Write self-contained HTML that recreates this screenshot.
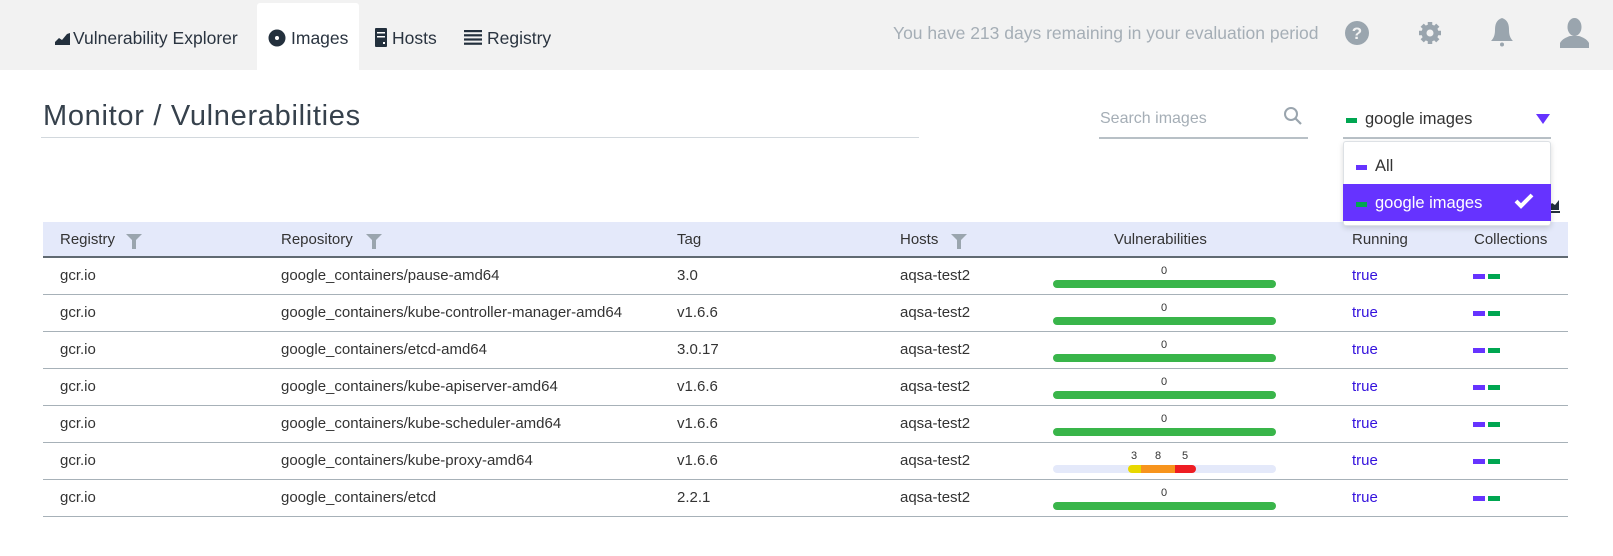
<!DOCTYPE html>
<html><head><meta charset="utf-8"><style>
*{margin:0;padding:0;box-sizing:border-box}
body{width:1613px;height:556px;overflow:hidden;background:#fff;font-family:"Liberation Sans",sans-serif;color:#333;position:relative}
.a{position:absolute;white-space:nowrap}
#top{position:absolute;left:0;top:0;width:1613px;height:70px;background:#f2f2f2}
.nav{font-size:17.5px;color:#2a3440;top:28px}
.hd{font-size:15px;color:#333;top:231px}
.cell{font-size:15px;color:#333}
.line{position:absolute;left:43px;width:1525px;height:1px;background:#a7b1b8}
.bar{position:absolute;left:1053px;width:223px;height:8px;border-radius:4px;background:#39b54a}
.num{position:absolute;font-size:11px;color:#333}
.sq{position:absolute;width:12px;height:5px}
</style></head><body>
<div id="top"></div>
<div class="a" style="left:257px;top:3px;width:102px;height:67px;background:#fff;border-radius:3px 3px 0 0"></div>
<svg class="a" style="left:55px;top:33px" width="15" height="12" viewBox="0 0 15 12"><path d="M0 12 L0 9 L4 5 L7 7 L12 1 L15 0 L15 12Z" fill="#23303d"/></svg>
<div class="a nav" style="left:73px">Vulnerability Explorer</div>
<svg class="a" style="left:268px;top:29px" width="18" height="18" viewBox="0 0 18 18"><circle cx="9" cy="9" r="8.5" fill="#23303d"/><circle cx="9" cy="9" r="2" fill="#fff"/></svg>
<div class="a nav" style="left:291px">Images</div>
<svg class="a" style="left:375px;top:28px" width="12" height="19" viewBox="0 0 12 19"><rect width="12" height="19" rx="1" fill="#23303d"/><rect x="2" y="4" width="8" height="1.5" fill="#fff"/><rect x="2" y="8" width="8" height="1.5" fill="#fff"/><rect x="8" y="14" width="2" height="2" fill="#fff"/></svg>
<div class="a nav" style="left:392px">Hosts</div>
<svg class="a" style="left:464px;top:30px" width="18" height="15" viewBox="0 0 18 15"><g fill="#23303d"><rect y="0" width="18" height="2.2"/><rect y="4.2" width="18" height="2.2"/><rect y="8.4" width="18" height="2.2"/><rect y="12.6" width="18" height="2.2"/></g></svg>
<div class="a nav" style="left:487px">Registry</div>
<div class="a" style="left:893px;top:23px;font-size:17.5px;color:#a5aeb6">You have 213 days remaining in your evaluation period</div>
<svg class="a" style="left:1345px;top:21px" width="24" height="24" viewBox="0 0 24 24"><circle cx="12" cy="12" r="12" fill="#9aa5ae"/><text x="12" y="18" text-anchor="middle" font-size="17" font-weight="bold" fill="#f2f2f2" font-family="Liberation Sans">?</text></svg>
<svg class="a" style="left:1418px;top:21px" width="24" height="24" viewBox="0 0 24 24"><g fill="#9aa5ae"><circle cx="12" cy="12" r="8.5"/><g stroke="#9aa5ae" stroke-width="4.5"><line x1="12" y1="1" x2="12" y2="23"/><line x1="1" y1="12" x2="23" y2="12"/><line x1="4.2" y1="4.2" x2="19.8" y2="19.8"/><line x1="19.8" y1="4.2" x2="4.2" y2="19.8"/></g></g><circle cx="12" cy="12" r="3.5" fill="#f2f2f2"/></svg>
<svg class="a" style="left:1490px;top:18px" width="24" height="29" viewBox="0 0 24 29"><path d="M12 0 C6 2 5 7 5 12 C5 18 3 21 1 23 L23 23 C21 21 19 18 19 12 C19 7 18 2 12 0Z" fill="#9aa5ae"/><circle cx="12" cy="26.5" r="2" fill="#9aa5ae"/></svg>
<svg class="a" style="left:1560px;top:18px" width="29" height="30" viewBox="0 0 29 30"><ellipse cx="14.5" cy="9" rx="7" ry="9" fill="#9aa5ae"/><path d="M0 30 L0 25 C2 21 7 19 10 18 L19 18 C22 19 27 21 29 25 L29 30Z" fill="#9aa5ae"/></svg>

<div class="a" style="left:43px;top:100px;font-size:29px;color:#36414c;letter-spacing:0.7px">Monitor / Vulnerabilities</div>
<div class="a" style="left:41px;top:137px;width:878px;height:1px;background:#d2d8dd"></div>
<div class="a" style="left:1100px;top:110px;font-size:16px;color:#a5aeb6">Search images</div>
<svg class="a" style="left:1283px;top:106px" width="20" height="20" viewBox="0 0 20 20"><circle cx="8" cy="8" r="6" fill="none" stroke="#9aa5ae" stroke-width="2"/><line x1="12.5" y1="12.5" x2="18" y2="18" stroke="#9aa5ae" stroke-width="2.2"/></svg>
<div class="a" style="left:1099px;top:137px;width:209px;height:2px;background:#b8c0c6"></div>
<div class="a" style="left:1346px;top:118px;width:11px;height:5px;background:#00a651"></div>
<div class="a" style="left:1365px;top:110px;font-size:16.5px;color:#333">google images</div>
<svg class="a" style="left:1536px;top:114px" width="14" height="10" viewBox="0 0 14 10"><path d="M0 0 L14 0 L7 10Z" fill="#6633ff"/></svg>
<div class="a" style="left:1343px;top:137px;width:208px;height:2px;background:#b8c0c6"></div>
<svg class="a" style="left:1545px;top:197px" width="16" height="16" viewBox="0 0 16 16"><path d="M1 1 L1 15 L15 15" fill="none" stroke="#23303d" stroke-width="2"/><path d="M3 13 L3 10 L7 6 L10 8 L14 3 L14 13Z" fill="#23303d"/></svg>

<div class="a" style="left:43px;top:222px;width:1525px;height:35px;background:#e4e9fa"></div>
<div class="a" style="left:43px;top:256px;width:1525px;height:2px;background:#606a72"></div>
<div class="a hd" style="left:60px">Registry</div>
<svg class="a" style="left:126px;top:234px" width="16" height="15" viewBox="0 0 16 15"><path d="M0 0 L16 0 L10 6 L10 15 L6 15 L6 6Z" fill="#9aa5ae"/></svg>
<div class="a hd" style="left:281px">Repository</div>
<svg class="a" style="left:366px;top:234px" width="16" height="15" viewBox="0 0 16 15"><path d="M0 0 L16 0 L10 6 L10 15 L6 15 L6 6Z" fill="#9aa5ae"/></svg>
<div class="a hd" style="left:677px">Tag</div>
<div class="a hd" style="left:900px">Hosts</div>
<svg class="a" style="left:951px;top:234px" width="16" height="15" viewBox="0 0 16 15"><path d="M0 0 L16 0 L10 6 L10 15 L6 15 L6 6Z" fill="#9aa5ae"/></svg>
<div class="a hd" style="left:1114px">Vulnerabilities</div>
<div class="a hd" style="left:1352px">Running</div>
<div class="a hd" style="left:1474px">Collections</div>

<div id="rows"></div>
<script>
var d=[["google_containers/pause-amd64","3.0"],["google_containers/kube-controller-manager-amd64","v1.6.6"],["google_containers/etcd-amd64","3.0.17"],["google_containers/kube-apiserver-amd64","v1.6.6"],["google_containers/kube-scheduler-amd64","v1.6.6"],["google_containers/kube-proxy-amd64","v1.6.6"],["google_containers/etcd","2.2.1"]];
var h="";
d.forEach(function(r,i){var y=257+i*37;var t=y+10;
h+='<div class="a cell" style="left:60px;top:'+t+'px">gcr.io</div>';
h+='<div class="a cell" style="left:281px;top:'+t+'px">'+r[0]+'</div>';
h+='<div class="a cell" style="left:677px;top:'+t+'px">'+r[1]+'</div>';
h+='<div class="a cell" style="left:900px;top:'+t+'px">aqsa-test2</div>';
h+='<div class="a cell" style="left:1352px;top:'+t+'px;color:#3311dd">true</div>';
h+='<div class="sq" style="left:1473px;top:'+(y+17)+'px;background:#6633ff"></div><div class="sq" style="left:1488px;top:'+(y+17)+'px;background:#00a651"></div>';
if(i==5){h+='<div class="bar" style="top:'+(y+23)+'px;background:#e4e9fa"></div>';
h+='<div class="a" style="left:1128px;top:'+(y+23)+'px;width:68px;height:8px;border-radius:4px;overflow:hidden;display:flex"><div style="width:13px;background:#e8d800"></div><div style="width:34px;background:#f7941d"></div><div style="width:21px;background:#ee1d23"></div></div>';
h+='<div class="num" style="left:1131px;top:'+(y+8)+'px">3</div><div class="num" style="left:1155px;top:'+(y+8)+'px">8</div><div class="num" style="left:1182px;top:'+(y+8)+'px">5</div>';}
else{h+='<div class="bar" style="top:'+(y+23)+'px"></div><div class="num" style="left:1161px;top:'+(y+8)+'px">0</div>';}
h+='<div class="line" style="top:'+(y+37)+'px"></div>';});
document.getElementById("rows").innerHTML=h;
</script>

<div class="a" style="left:1343px;top:141px;width:208px;height:85px;background:#fff;border:1px solid #dde1e5;border-radius:3px;box-shadow:0 2px 6px rgba(0,0,0,0.15)"></div>
<div class="a" style="left:1356px;top:165px;width:11px;height:5px;background:#6633ff"></div>
<div class="a" style="left:1375px;top:157px;font-size:16.5px;color:#333">All</div>
<div class="a" style="left:1343px;top:184px;width:208px;height:37px;background:#6633ff"></div>
<div class="a" style="left:1356px;top:202px;width:11px;height:5px;background:#00a651"></div>
<div class="a" style="left:1375px;top:194px;font-size:16.5px;color:#fff">google images</div>
<svg class="a" style="left:1514px;top:193px" width="20" height="16" viewBox="0 0 20 16"><path d="M2 8 L7 13 L18 2" fill="none" stroke="#fff" stroke-width="4"/></svg>
</body></html>
